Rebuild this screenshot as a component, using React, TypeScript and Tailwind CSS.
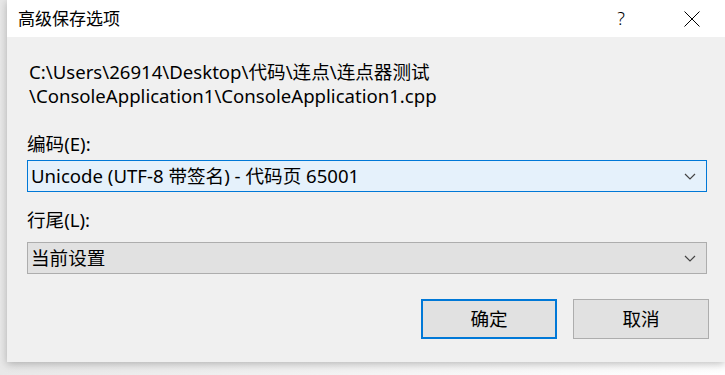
import React from 'react';

const font = { fontFamily: '"Segoe UI", "Noto Sans", "Noto Sans CJK SC", sans-serif' };

function Chevron() {
  return (
    <svg width="12" height="7" viewBox="0 0 12 7" className="shrink-0">
      <path d="M1 1 L6 6 L11 1" fill="none" stroke="#444" strokeWidth="1.2" />
    </svg>
  );
}

function Combo({ value, focused }: { value: string; focused?: boolean }) {
  return (
    <div
      className={`flex h-[32px] w-[680px] items-center justify-between border pl-[3px] pr-[10px] text-[18.6px] text-black ${
        focused ? 'border-[#0078d7] bg-[#e5f1fb]' : 'border-[#adadad] bg-[#e1e1e1]'
      }`}
    >
      <span className="leading-none">{value}</span>
      <Chevron />
    </div>
  );
}

export default function App() {
  return (
    <div className="h-[375px] w-[725px] overflow-hidden bg-white" style={font}>
      <div className="h-full pl-[7px] pb-[13px] bg-gradient-to-r from-[#e8e8e8] to-white">
        <div className="flex h-full flex-col bg-[#f0f0f0] shadow-[0_2px_8px_rgba(0,0,0,0.25)]">
          {/* title bar */}
          <div className="flex h-[37px] items-center bg-white pl-[11px]">
            <span className="text-[17px] text-black">高级保存选项</span>
            <span className="ml-auto mr-[59px] text-[18px] font-light text-black">?</span>
            <svg width="16" height="16" viewBox="0 0 16 16" className="mr-[25px]">
              <path d="M0.5 0.5 L15.5 15.5 M15.5 0.5 L0.5 15.5" stroke="#000" strokeWidth="1" />
            </svg>
          </div>

          <div className="flex flex-col pl-[20px] pt-[23px]">
            <div className="pl-[2px] text-[18.6px] leading-[24px] text-black">
              <div>C:\Users\26914\Desktop\代码\连点\连点器测试</div>
              <div>\ConsoleApplication1\ConsoleApplication1.cpp</div>
            </div>

            <div className="mt-[24px] text-[18.6px] leading-[24px] text-black">编码(E):</div>
            <div className="mt-[4px]">
              <Combo value="Unicode (UTF-8 带签名) - 代码页 65001" focused />
            </div>

            <div className="mt-[16px] text-[18.6px] leading-[24px] text-black">行尾(L):</div>
            <div className="mt-[10px]">
              <Combo value="当前设置" />
            </div>

            <div className="mt-[25px] flex gap-[16px] pl-[394px]">
              <button className="flex h-[40px] w-[136px] items-center justify-center border-2 border-[#0078d7] bg-[#e1e1e1] text-[18.6px] text-black">
                确定
              </button>
              <button className="flex h-[40px] w-[136px] items-center justify-center border border-[#adadad] bg-[#e1e1e1] text-[18.6px] text-black">
                取消
              </button>
            </div>
          </div>
        </div>
      </div>
    </div>
  );
}
